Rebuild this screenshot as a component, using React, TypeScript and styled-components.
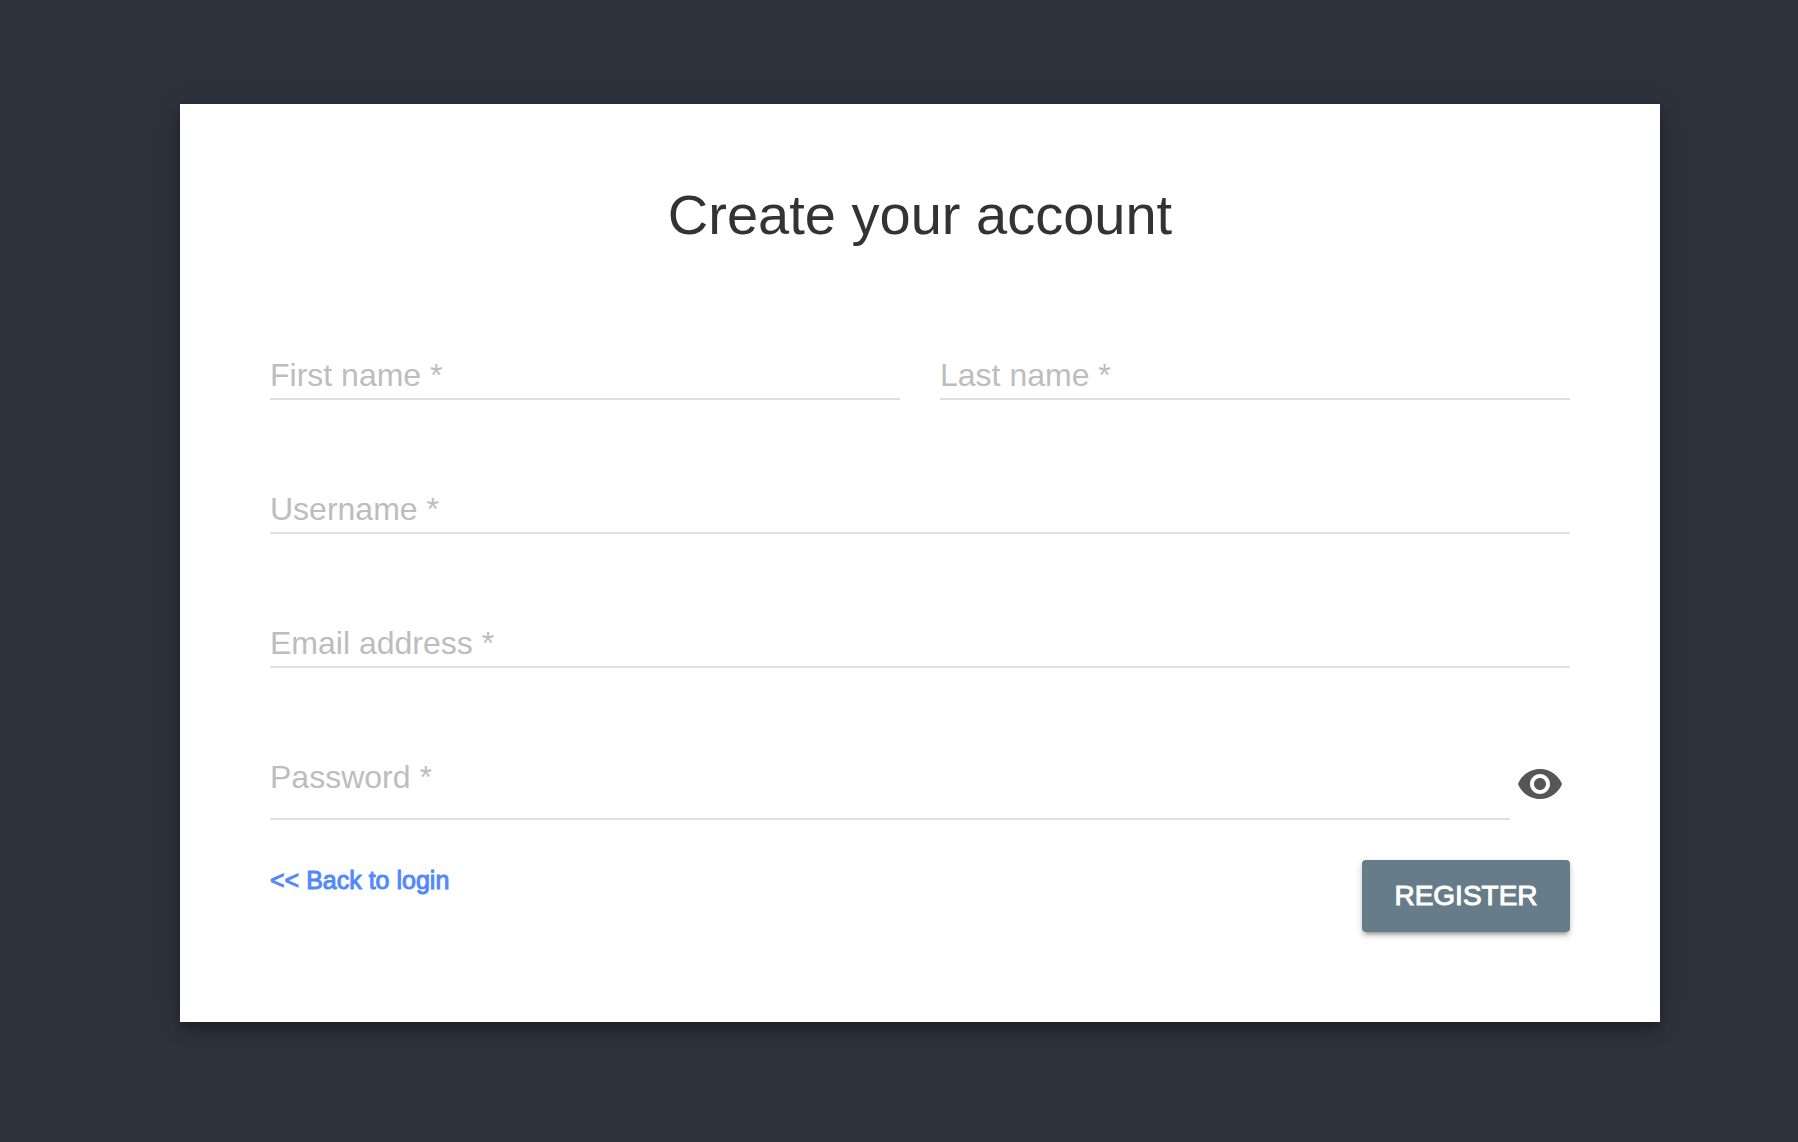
import { useState } from "react";
import styled, { createGlobalStyle } from "styled-components";

const GlobalStyle = createGlobalStyle`
  *, *::before, *::after {
    box-sizing: border-box;
  }

  body {
    margin: 0;
    background: #2e323d;
    font-family: "Liberation Sans", Arial, Helvetica, sans-serif;
    color: #333333;
  }
`;

const Page = styled.main`
  min-height: 100vh;
  padding: 104px 138px 120px 180px;
`;

const Card = styled.form`
  padding: 80px 90px 90px;
  background: #ffffff;
  box-shadow:
    0 6px 10px -2px rgba(0, 0, 0, 0.2),
    0 10px 16px 0 rgba(0, 0, 0, 0.14),
    0 2px 28px 0 rgba(0, 0, 0, 0.12);
`;

const Title = styled.h1`
  margin: 0 0 110px;
  font-size: 56px;
  line-height: 62px;
  font-weight: 400;
  text-align: center;
`;

const Fields = styled.div`
  display: flex;
  flex-direction: column;
  gap: 90px;
`;

const FieldRow = styled.div<{ $gap?: number }>`
  display: flex;
  align-items: flex-start;
  gap: ${({ $gap = 0 }) => $gap}px;
`;

const TextField = styled.input<{ $underlineGap?: number }>`
  flex: 1;
  min-width: 0;
  height: ${({ $underlineGap = 4 }) => 40 + $underlineGap}px;
  padding: 0 0 ${({ $underlineGap = 4 }) => $underlineGap}px;
  border: 0;
  border-bottom: 2px solid #e0e0e0;
  border-radius: 0;
  outline: 0;
  background: transparent;
  color: #333333;
  font-family: inherit;
  font-size: 32px;
  line-height: 36px;

  &::placeholder {
    color: #bdbdbd;
    opacity: 1;
  }

  &:focus {
    border-bottom-color: #677c89;
  }
`;

const IconButton = styled.button`
  display: flex;
  align-items: center;
  justify-content: center;
  width: 60px;
  height: 52px;
  padding: 0;
  border: 0;
  background: transparent;
  color: #565656;
  cursor: pointer;
`;

const Actions = styled.div`
  display: flex;
  align-items: flex-start;
  justify-content: space-between;
  margin-top: 40px;
`;

const BackLink = styled.a`
  color: #5189fb;
  font-size: 25px;
  line-height: 40px;
  -webkit-text-stroke: 1px currentColor;
  text-decoration: none;
`;

const SubmitButton = styled.button`
  min-width: 208px;
  height: 72px;
  padding: 0 32px;
  border: 0;
  border-radius: 4px;
  background: #677c89;
  box-shadow:
    0 6px 2px -4px rgba(0, 0, 0, 0.2),
    0 4px 4px 0 rgba(0, 0, 0, 0.14),
    0 2px 10px 0 rgba(0, 0, 0, 0.12);
  color: #ffffff;
  font-family: inherit;
  font-size: 28px;
  line-height: 36px;
  -webkit-text-stroke: 1px currentColor;
  text-transform: uppercase;
  cursor: pointer;
`;

function EyeIcon() {
  return (
    <svg width="48" height="48" viewBox="0 0 24 24" fill="currentColor" aria-hidden="true">
      <path d="M12 4.5C7 4.5 2.73 7.61 1 12c1.73 4.39 6 7.5 11 7.5s9.27-3.11 11-7.5c-1.73-4.39-6-7.5-11-7.5zM12 17c-2.76 0-5-2.24-5-5s2.24-5 5-5 5 2.24 5 5-2.24 5-5 5zm0-8c-1.66 0-3 1.34-3 3s1.34 3 3 3 3-1.34 3-3-1.34-3-3-3z" />
    </svg>
  );
}

export default function App() {
  const [passwordVisible, setPasswordVisible] = useState(false);

  return (
    <>
      <GlobalStyle />
      <Page>
        <Card onSubmit={(event) => event.preventDefault()}>
          <Title>Create your account</Title>
          <Fields>
            <FieldRow $gap={40}>
              <TextField type="text" name="firstName" aria-label="First name" placeholder="First name *" required />
              <TextField type="text" name="lastName" aria-label="Last name" placeholder="Last name *" required />
            </FieldRow>
            <FieldRow>
              <TextField type="text" name="username" aria-label="Username" placeholder="Username *" required />
            </FieldRow>
            <FieldRow>
              <TextField type="email" name="email" aria-label="Email address" placeholder="Email address *" required />
            </FieldRow>
            <FieldRow>
              <TextField
                $underlineGap={22}
                type={passwordVisible ? "text" : "password"}
                name="password"
                aria-label="Password"
                placeholder="Password *"
                required
              />
              <IconButton
                type="button"
                aria-label="Show password"
                aria-pressed={passwordVisible}
                onClick={() => setPasswordVisible((visible) => !visible)}
              >
                <EyeIcon />
              </IconButton>
            </FieldRow>
          </Fields>
          <Actions>
            <BackLink href="#login">&lt;&lt; Back to login</BackLink>
            <SubmitButton type="submit">Register</SubmitButton>
          </Actions>
        </Card>
      </Page>
    </>
  );
}
